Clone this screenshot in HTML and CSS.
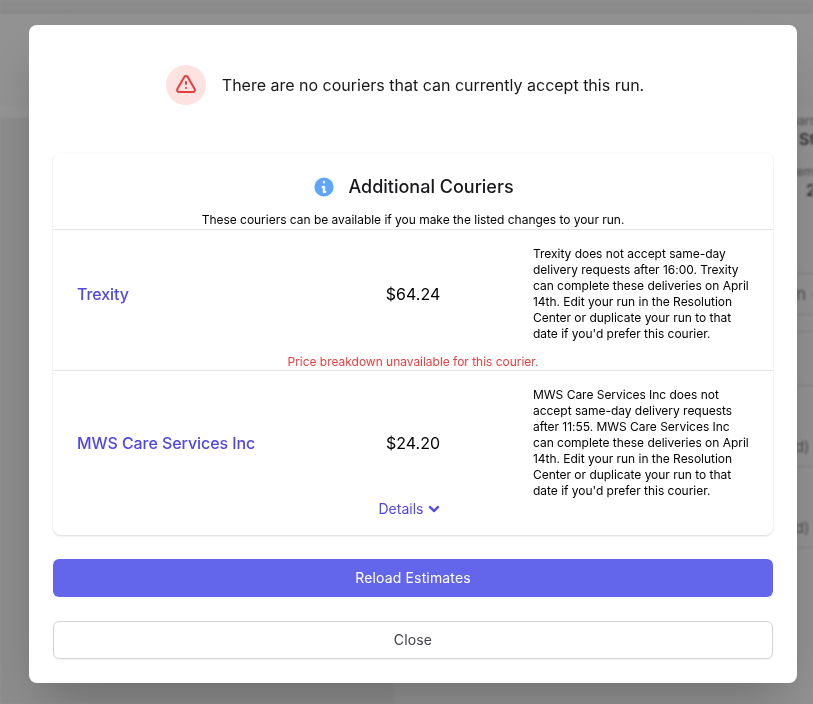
FILE: index.html
```html
<!DOCTYPE html>
<html lang="en">
<head>
<meta charset="utf-8">
<title>Additional Couriers</title>
<link rel="stylesheet" href="styles.css">
</head>
<body>
<div class="backdrop-page" aria-hidden="true">
  <div class="bg-top"></div>
  <div class="bg-sub"></div>
  <div class="bg-band"></div>
  <div class="bg-columns">
    <div class="bg-left"></div>
    <div class="bg-right">
      <div class="bg-side">
        <div class="bg-label bg-q">Quarter</div>
        <div class="bg-value bg-st">St</div>
        <div class="bg-label bg-r">Remaining</div>
        <div class="bg-value bg-two">2</div>
      </div>
      <div class="bg-row bg-row-title">Run (</div>
      <div class="bg-row bg-row-thin"></div>
      <div class="bg-row bg-row-gap"></div>
      <div class="bg-row bg-row-item">ded)</div>
      <div class="bg-row bg-row-item">ded)</div>
      <div class="bg-row"></div>
    </div>
  </div>
</div>
<div class="overlay">
  <div class="modal">
    <div class="alert">
      <span class="alert-icon">
        <svg width="24" height="24" viewBox="0 0 24 24" fill="none" stroke="#e53e3e" stroke-width="2" stroke-linecap="round" stroke-linejoin="round"><path d="M12 9v2m0 4h.01m-6.94 4h13.86c1.54 0 2.5-1.67 1.73-3L13.73 4c-.77-1.33-2.69-1.33-3.46 0L3.34 16c-.77 1.33.19 3 1.73 3z"/></svg>
      </span>
      <span class="alert-text">There are no couriers that can currently accept this run.</span>
    </div>
    <section class="card">
      <div class="card-head">
        <svg class="info-icon" width="24" height="24" viewBox="0 0 20 20" fill="#60a5fa"><path fill-rule="evenodd" d="M18 10a8 8 0 1 1-16 0 8 8 0 0 1 16 0zm-7-4a1 1 0 1 1-2 0 1 1 0 0 1 2 0zM9 9a1 1 0 0 0 0 2v3a1 1 0 0 0 1 1h1a1 1 0 1 0 0-2v-3a1 1 0 0 0-1-1H9z" clip-rule="evenodd"/></svg>
        <h2 class="card-title">Additional Couriers</h2>
      </div>
      <p class="card-sub">These couriers can be available if you make the listed changes to your run.</p>
      <div class="courier courier-first">
        <div class="courier-row">
          <a class="courier-name">Trexity</a>
          <div class="courier-price">$64.24</div>
          <p class="courier-note">Trexity does not accept same-day delivery requests after 16:00. Trexity can complete these deliveries on April 14th. Edit your run in the Resolution Center or duplicate your run to that date if you'd prefer this courier.</p>
        </div>
        <div class="courier-error">Price breakdown unavailable for this courier.</div>
      </div>
      <div class="courier courier-second">
        <div class="courier-row">
          <a class="courier-name">MWS Care Services Inc</a>
          <div class="courier-price">$24.20</div>
          <p class="courier-note">MWS Care Services Inc does not accept same-day delivery requests after 11:55. MWS Care Services Inc can complete these deliveries on April 14th. Edit your run in the Resolution Center or duplicate your run to that date if you'd prefer this courier.</p>
        </div>
        <a class="details">Details<svg class="chevron" width="20" height="20" viewBox="0 0 20 20" fill="currentColor"><path fill-rule="evenodd" d="M5.293 7.293a1 1 0 0 1 1.414 0L10 10.586l3.293-3.293a1 1 0 1 1 1.414 1.414l-4 4a1 1 0 0 1-1.414 0l-4-4a1 1 0 0 1 0-1.414z" clip-rule="evenodd"/></svg></a>
      </div>
    </section>
    <button class="btn btn-primary">Reload Estimates</button>
    <button class="btn btn-secondary">Close</button>
  </div>
</div>
</body>
</html>
```
FILE: styles.css
```css
* { box-sizing: border-box; }
html, body { margin: 0; height: 100%; overflow: hidden; }
body {
  width: 813px;
  height: 704px;
  background: #fff;
  font-family: Inter, "Liberation Sans", sans-serif;
  color: #18181b;
}
.backdrop-page {
  width: 813px;
  height: 704px;
  display: flex;
  flex-direction: column;
  filter: blur(0.8px);
  background: #fff;
}
.bg-top { height: 13px; background: #f2f2f2; border-bottom: 1px solid #dcdcdc; }
.bg-sub { height: 92px; background: #fbfbfb; }
.bg-band { height: 13px; background: #ffffff; }
.bg-columns { flex: 1; display: flex; min-height: 0; }
.bg-left { flex: none; width: 406px; background: #f2f2f2; border-right: 13px solid #fbfbfb; }
.bg-right { flex: none; width: 407px; min-width: 0; display: flex; flex-direction: column; color: #888; background: #fbfbfb; }
.bg-side { height: 155px; white-space: nowrap; overflow: hidden; }
.bg-label { font-size: 12px; line-height: 16px; }
.bg-value { font-size: 16px; line-height: 20px; font-weight: 600; color: #555; }
.bg-q { margin-left: 376px; margin-top: -5px; }
.bg-st { margin-left: 393px; }
.bg-r { margin-left: 383px; margin-top: 15px; }
.bg-two { margin-left: 400px; }
.bg-row { border-top: 1px solid #dcdcdc; white-space: nowrap; overflow: hidden; flex: none; }
.bg-row-title { height: 41px; font-size: 17px; line-height: 40px; padding-left: 369px; }
.bg-row-thin { height: 17px; }
.bg-row-gap { height: 54px; }
.bg-row-item { height: 81px; font-size: 15px; line-height: 122px; padding-left: 371px; }

.overlay {
  position: fixed;
  inset: 0;
  background: rgba(0, 0, 0, 0.42);
  padding: 25px 16px 0 29px;
}
.modal {
  width: 768px;
  height: 658px;
  padding: 40px 24px 24px;
  background: #fff;
  border-radius: 8px;
  box-shadow: 0 25px 50px -12px rgba(0,0,0,.25);
  display: flex;
  flex-direction: column;
}
.alert {
  display: flex;
  align-items: center;
  justify-content: center;
  gap: 16px;
  height: 40px;
  margin-bottom: 48px;
  padding-right: 16px;
}
.alert-icon {
  width: 40px;
  height: 40px;
  border-radius: 50%;
  background: #fde2e2;
  display: flex;
  align-items: center;
  justify-content: center;
}
.alert-text { font-size: 16px; line-height: 24px; color: #18181b; }
.card {
  height: 382px;
  border-radius: 8px;
  box-shadow: 0 1px 3px rgba(0,0,0,.1), 0 1px 2px rgba(0,0,0,.06);
  display: flex;
  flex-direction: column;
}
.card-head {
  display: flex;
  align-items: center;
  justify-content: center;
  gap: 12px;
  height: 59px;
  padding: 14px 0 6px;
}
.info-icon { flex: none; }
.card-title { margin: 0; font-size: 18px; line-height: 28px; font-weight: 500; color: #18181b; }
.card-sub { margin: 0; height: 17px; font-size: 12px; line-height: 16px; letter-spacing: -0.025px; text-align: center; color: #000; }
.courier { border-top: 1px solid #e4e4e7; display: flex; flex-direction: column; }
.courier-first { height: 141px; }
.courier-second { flex: 1; }
.courier-row { display: grid; grid-template-columns: 240px 240px 240px; align-items: center; }
.courier-first .courier-row { height: 128px; }
.courier-second .courier-row { height: 144px; }
.courier-name { padding-left: 24px; font-size: 16px; line-height: 24px; font-weight: 500; letter-spacing: -0.07px; color: #5046e5; }
.courier-price { text-align: center; font-size: 16px; line-height: 24px; color: #000; }
.courier-note { margin: 0; padding: 0 20px 0 0; font-size: 12px; line-height: 16px; letter-spacing: -0.025px; color: #000; }
.courier-error { margin-top: -4px; text-align: center; font-size: 12px; line-height: 16px; letter-spacing: -0.025px; color: #e53e3e; }
.details {
  margin-top: -16px;
  padding-right: 3px;
  display: flex;
  align-items: center;
  justify-content: center;
  gap: 1px;
  font-size: 14px;
  line-height: 20px;
  color: #5046e5;
}
.chevron { stroke: currentColor; stroke-width: 0.5; }
.btn {
  display: block;
  width: 100%;
  height: 38px;
  border-radius: 6px;
  font-family: inherit;
  font-size: 14px;
  font-weight: 400;
  letter-spacing: 0.15px;
  padding: 0 0 2px;
}
.btn-primary { margin-top: 24px; border: 0; background: #6366eb; color: #fff; }
.btn-secondary {
  margin-top: 24px;
  border: 1px solid #d4d4d8;
  background: #fff;
  color: #3f3f46;
  box-shadow: 0 1px 2px rgba(0,0,0,.05);
}
```
